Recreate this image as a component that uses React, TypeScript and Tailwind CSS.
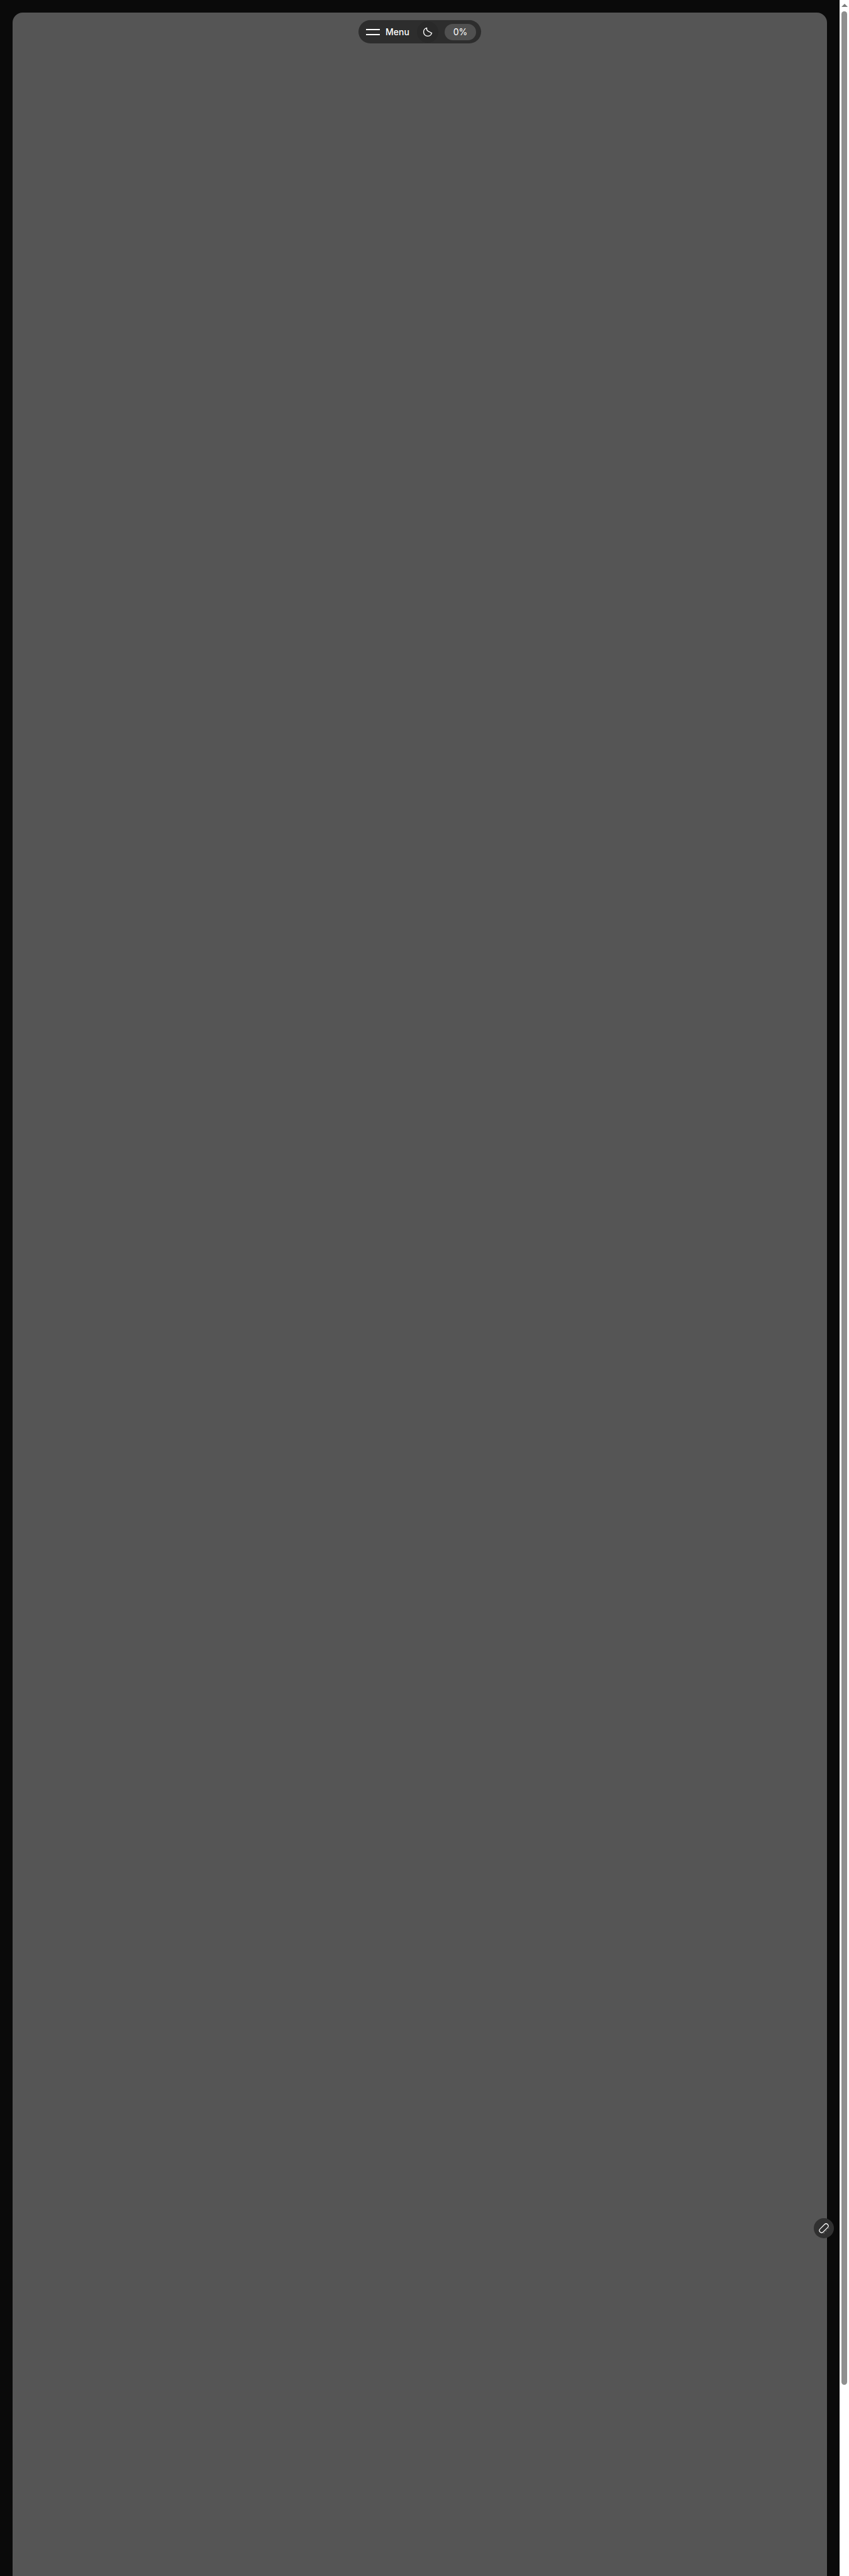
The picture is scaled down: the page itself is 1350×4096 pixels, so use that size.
// Floating menu pill at the top of the panel
function MenuPill() {
  return (
    <div className="absolute left-[570px] top-[32px] flex h-[37px] w-[195px] items-center rounded-full bg-[#2d2d2d] pl-[12px] pr-[8px] text-white">
      <div className="flex w-[22px] flex-col gap-[6px]">
        <span className="h-[2px] bg-white" />
        <span className="h-[2px] bg-white" />
      </div>
      <span className="ml-[9px] font-['Inter',sans-serif] text-[14px] font-medium">Menu</span>
      <div className="ml-[12px] flex h-[34px] w-[34px] items-center justify-center rounded-full bg-[#292929]">
        <svg width="16" height="16" viewBox="0 0 16 16" fill="none" stroke="currentColor" strokeWidth="1.4" strokeLinecap="round" strokeLinejoin="round">
          <path d="M6.6 1.4a6.6 6.6 0 1 0 8 8 4 4 0 0 1-3.4-1.8 4.2 4.2 0 0 1-3.2-1.6 4.4 4.4 0 0 1-1.4-4.6z" />
        </svg>
      </div>
      <div className="ml-auto flex h-[26px] w-[50px] items-center justify-center rounded-full bg-[#505050] font-['Inter',sans-serif] text-[14px]">0%</div>
    </div>
  );
}

function LinkButton() {
  return (
    <div className="absolute left-[1294px] top-[3527px] flex h-[32px] w-[32px] items-center justify-center rounded-full bg-[#303030] text-white">
      <svg width="22" height="22" viewBox="0 0 22 22" fill="none">
        <rect x="2.5" y="7.5" width="17" height="7" rx="3.5" stroke="currentColor" strokeWidth="1.2" transform="rotate(-45 11 11)" />
        <path d="M19 10.5l-1 1M11 19l1-1M15 15l-1 1" stroke="currentColor" strokeOpacity="0.5" strokeWidth="1" strokeLinecap="round" strokeDasharray="1 2" />
      </svg>
    </div>
  );
}

function Scrollbar() {
  return (
    <div className="flex h-[4096px] w-[15px] flex-col items-center bg-white">
      <div className="mt-[6px] h-0 w-0 border-x-[5px] border-b-[5px] border-x-transparent border-b-[#7a7a7a]" />
      <div className="mt-[7px] h-[3774px] w-[9px] rounded-full bg-[#8f8f8f]" />
    </div>
  );
}

export default function App() {
  return (
    <div className="relative flex h-[4096px] w-[1350px] overflow-hidden bg-[#0a0a0a]">
      <main className="flex-1 pl-[20px] pr-[20px] pt-[20px]">
        <div className="h-full rounded-t-[16px] bg-[#555555]" />
      </main>
      <Scrollbar />
      <MenuPill />
      <LinkButton />
    </div>
  );
}
